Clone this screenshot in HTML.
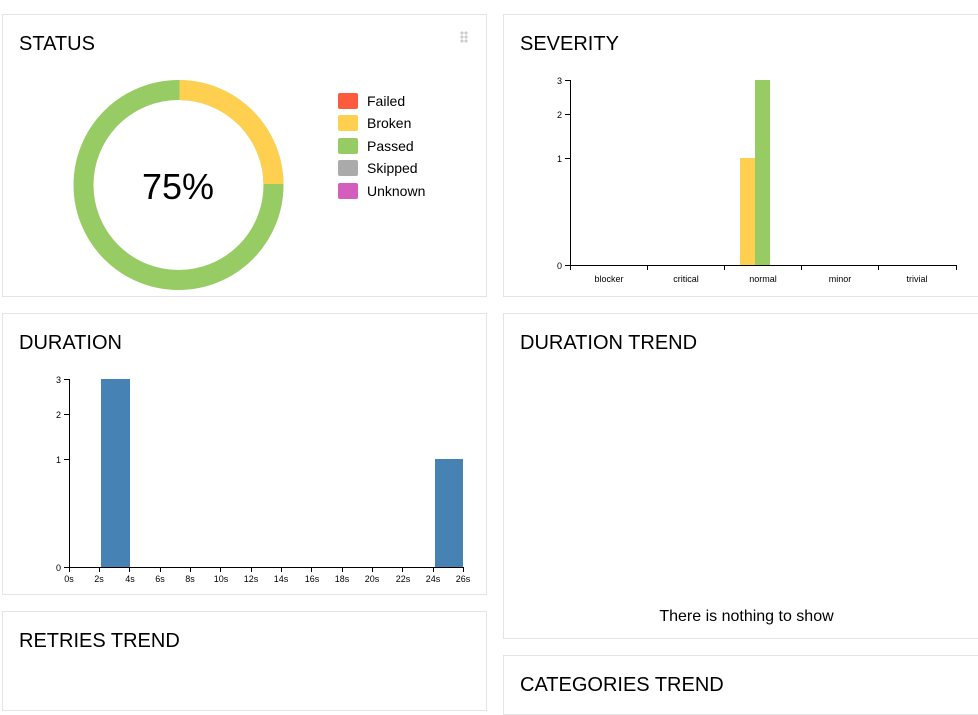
<!DOCTYPE html>
<html><head><meta charset="utf-8"><style>
body{margin:0;background:#fff;width:978px;height:694px;overflow:hidden;position:relative;font-family:"Liberation Sans",Arial,sans-serif;color:#000}
.card{position:absolute;border:1px solid #e4e4e4;background:#fff;box-sizing:border-box}
.t{position:absolute;left:16px;top:18px;font-size:20px}
svg text{font-family:"Liberation Sans",Arial,sans-serif}
</style></head><body>
<div class="card" style="left:2px;top:14px;width:485px;height:283px"><div class="t">STATUS</div>
<div style="position:absolute;left:457px;top:16px;width:8px;height:12px;background:radial-gradient(circle,#ccc 1.5px,transparent 1.6px) 0 0/4px 4px"></div></div>
<div class="card" style="left:503px;top:14px;width:480px;height:283px"><div class="t">SEVERITY</div></div>
<div class="card" style="left:2px;top:313px;width:485px;height:282px"><div class="t">DURATION</div></div>
<div class="card" style="left:503px;top:313px;width:480px;height:326px"><div class="t">DURATION TREND</div>
<div style="position:absolute;left:0;width:485px;top:294px;text-align:center;font-size:16px">There is nothing to show</div></div>
<div class="card" style="left:2px;top:611px;width:485px;height:100px"><div class="t">RETRIES TREND</div></div>
<div class="card" style="left:503px;top:655px;width:480px;height:60px"><div class="t">CATEGORIES TREND</div></div>

<svg width="978" height="694" style="position:absolute;left:0;top:0">
<circle cx="178.5" cy="185" r="95" fill="none" stroke="#97cc64" stroke-width="20"/>
<path d="M179.5 80 A105 105 0 0 1 283.5 184 L263.5 184 A85 85 0 0 0 179.5 100Z" fill="#ffd050"/>
<text x="178" y="199" font-size="36" text-anchor="middle">75%</text>
<g font-size="14">
<rect x="338" y="93" width="20" height="16" rx="2" fill="#fd5a3e"/><text x="367" y="106">Failed</text>
<rect x="338" y="115" width="20" height="16" rx="2" fill="#ffd050"/><text x="367" y="128">Broken</text>
<rect x="338" y="138" width="20" height="16" rx="2" fill="#97cc64"/><text x="367" y="151">Passed</text>
<rect x="338" y="160" width="20" height="16" rx="2" fill="#aaa"/><text x="367" y="173">Skipped</text>
<rect x="338" y="183" width="20" height="16" rx="2" fill="#d35ebe"/><text x="367" y="196">Unknown</text>
</g>
<rect x="740" y="158" width="15" height="107" fill="#ffd050"/>
<rect x="755" y="80" width="15" height="185" fill="#97cc64"/>
<g stroke="#000" fill="none">
<path d="M565 80.5H570.5V265.5H565M565 114.5H570M565 158.5H570"/>
<path d="M570.5 270V265.5H956.5V270M647.5 265V270M724.5 265V270M801.5 265V270M878.5 265V270"/>
</g>
<g font-size="9" text-anchor="end"><text x="562" y="84">3</text><text x="562" y="118">2</text><text x="562" y="162">1</text><text x="562" y="269">0</text></g>
<g font-size="9" text-anchor="middle"><text x="609" y="282">blocker</text><text x="686" y="282">critical</text><text x="763" y="282">normal</text><text x="840" y="282">minor</text><text x="917" y="282">trivial</text></g>
<rect x="101" y="379" width="29" height="188" fill="#4682b4"/>
<rect x="435" y="459" width="28" height="108" fill="#4682b4"/>
<g stroke="#000" fill="none">
<path d="M64 379.5H69.5V567.5H64M64 414.5H69M64 459.5H69"/>
<path d="M69.5 572V567.5H463.5V572"/>
<path d="M99.5 567V572M129.5 567V572M160.5 567V572M190.5 567V572M220.5 567V572M251.5 567V572M281.5 567V572M311.5 567V572M342.5 567V572M372.5 567V572M402.5 567V572M433.5 567V572"/>
</g>
<g font-size="9" text-anchor="end"><text x="61" y="383">3</text><text x="61" y="418">2</text><text x="61" y="463">1</text><text x="61" y="571">0</text></g>
<g font-size="9" text-anchor="middle"><text x="69" y="582">0s</text><text x="99" y="582">2s</text><text x="130" y="582">4s</text><text x="160" y="582">6s</text><text x="190" y="582">8s</text><text x="221" y="582">10s</text><text x="251" y="582">12s</text><text x="281" y="582">14s</text><text x="312" y="582">16s</text><text x="342" y="582">18s</text><text x="372" y="582">20s</text><text x="403" y="582">22s</text><text x="433" y="582">24s</text><text x="463" y="582">26s</text></g>
</svg>
</body></html>
